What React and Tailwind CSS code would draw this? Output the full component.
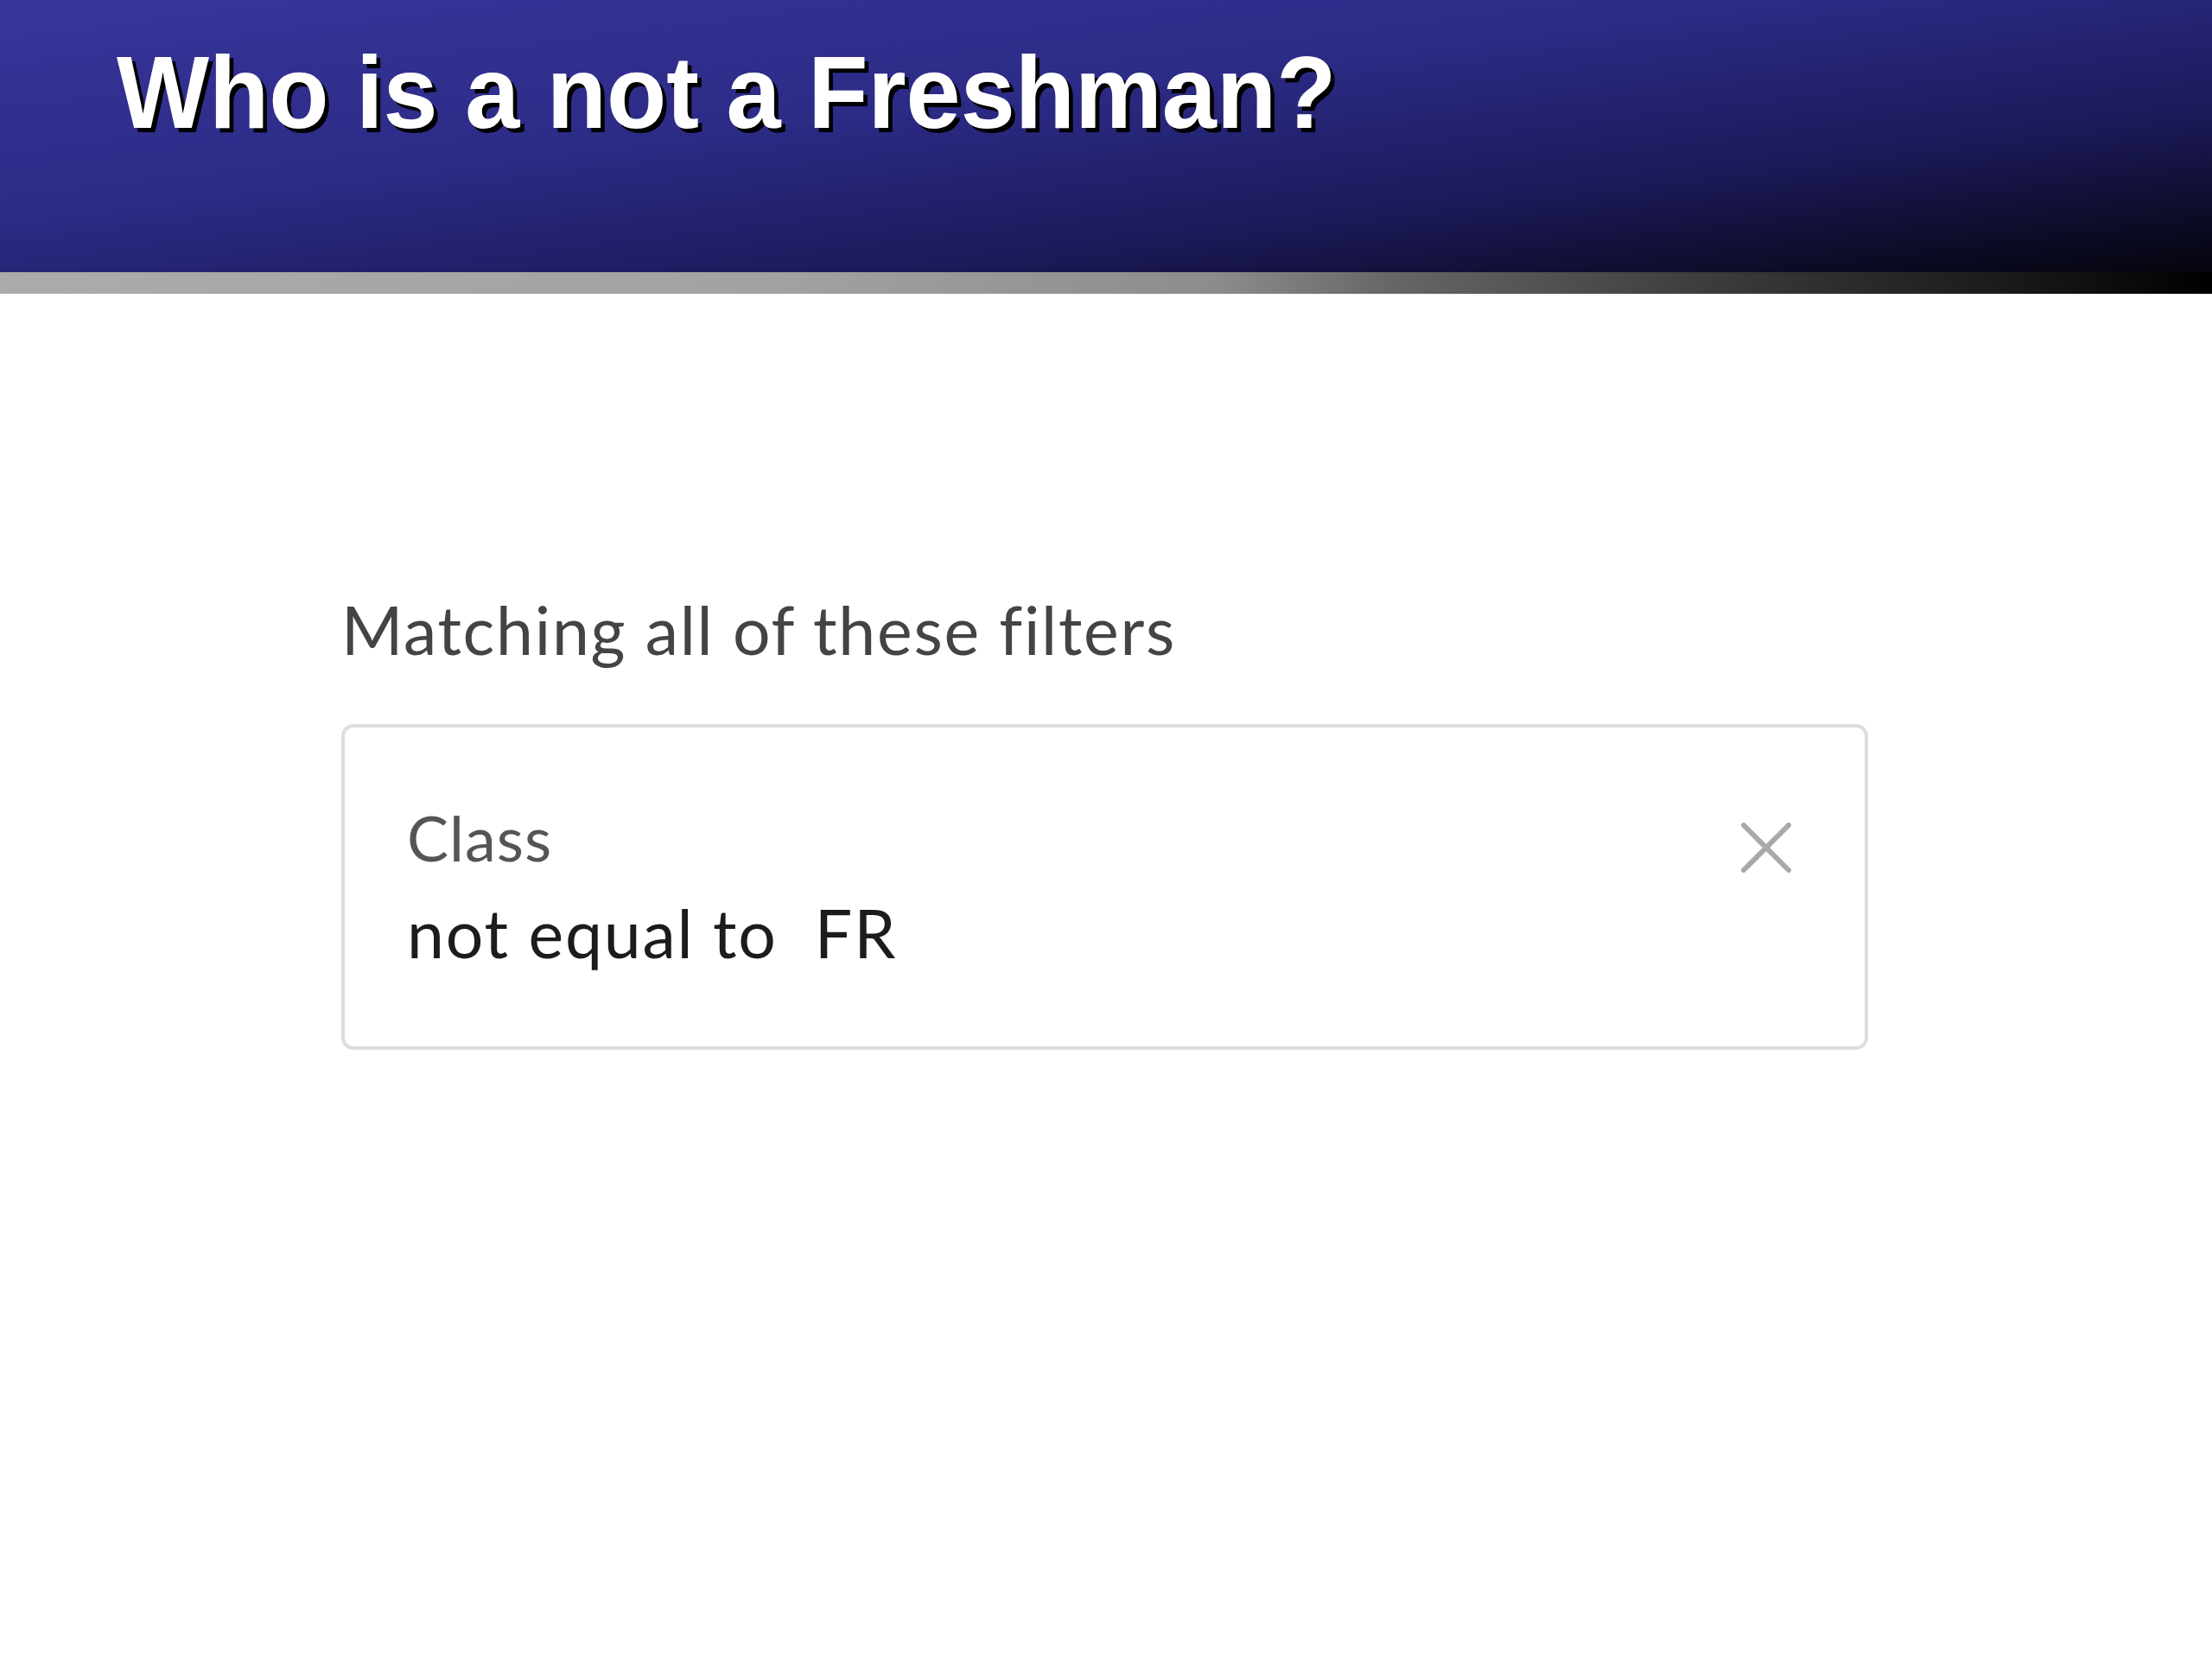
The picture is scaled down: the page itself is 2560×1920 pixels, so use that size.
export default function App() {
  return (
    <div className="w-[2560px] h-[1920px] bg-white overflow-hidden">
      <div className="h-[315px] pl-[135px] pt-[47px] bg-[linear-gradient(to_bottom_right,#37369b_0%,#2c2b86_40%,#1c1a5a_70%,#04040c_100%)]">
        <h1
          className="text-white font-bold text-[119px] leading-[119px] whitespace-nowrap origin-left scale-x-[0.953] [text-shadow:5px_5px_0_#000]"
          style={{ fontFamily: '"Liberation Sans", Arial, sans-serif' }}
        >
          Who is a not a Freshman?
        </h1>
      </div>
      <div className="h-[25px] bg-[linear-gradient(to_right,#ababab_0%,#a2a2a2_35%,#8c8c8c_55%,#666666_63%,#3a3a3a_78%,#1c1c1c_90%,#000000_100%)]" />
      <div
        className="pl-[395px] pt-[350px]"
        style={{ fontFamily: 'Lato, "Open Sans", sans-serif' }}
      >
        <div className="text-[77px] leading-[77px] text-[#444444] whitespace-nowrap tracking-[1.7px]">
          Matching all of these filters
        </div>
        <div className="mt-[71px] w-[1767px] h-[377px] border-4 border-[#dedede] rounded-[14px] flex pt-[91px] pl-[72px] pr-[85px]">
          <div className="flex flex-col">
            <div className="text-[72px] leading-[72px] text-[#555555] tracking-[1px]">Class</div>
            <div className="mt-[36px] text-[77px] leading-[77px] text-[#1c1c1c] whitespace-pre tracking-[1.8px]">
              not equal to  FR
            </div>
          </div>
          <div className="ml-auto mt-[19px] w-[58px] h-[58px]">
            <svg width="58" height="58" viewBox="0 0 58 58">
              <path d="M3 3 L55 55 M55 3 L3 55" stroke="#a9a9a9" strokeWidth="6" strokeLinecap="round" />
            </svg>
          </div>
        </div>
      </div>
    </div>
  );
}
